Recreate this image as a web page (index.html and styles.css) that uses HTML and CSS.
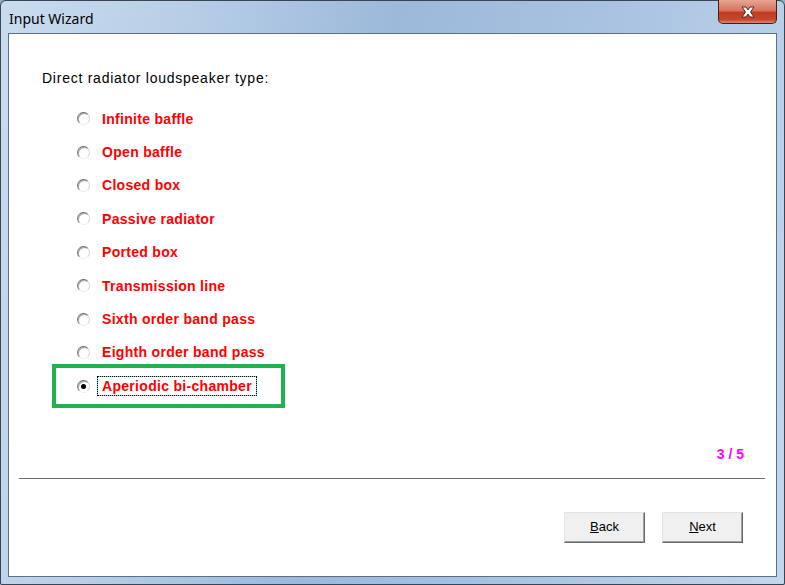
FILE: index.html
```html
<!DOCTYPE html>
<html>
	<head>
		<meta charset="UTF-8">
		<title>Input Wizard</title>
		<link rel="stylesheet" href="styles.css">
	</head>
	<body>
		<div class="window">
			<div class="titlebar">
				<span class="title">Input Wizard</span>
				<div class="closeBtn">
					<svg width="20" height="14" viewBox="0 0 20 14">
						<path d="M4 2 L8 2 L10 5 L12 2 L16 2 L12.5 7 L16 12 L12 12 L10 9 L8 12 L4 12 L7.5 7 Z" fill="#fff" stroke="#4a2a2a" stroke-width="1" stroke-linejoin="round"/>
					</svg>
				</div>
			</div>
			<div class="client">
				<div class="content">
					<div class="heading">Direct radiator loudspeaker type:</div>
					<div class="options">
						<div class="option"><span class="radio"></span><span class="label">Infinite baffle</span></div>
						<div class="option"><span class="radio"></span><span class="label">Open baffle</span></div>
						<div class="option"><span class="radio"></span><span class="label">Closed box</span></div>
						<div class="option"><span class="radio"></span><span class="label">Passive radiator</span></div>
						<div class="option"><span class="radio"></span><span class="label">Ported box</span></div>
						<div class="option"><span class="radio"></span><span class="label">Transmission line</span></div>
						<div class="option"><span class="radio"></span><span class="label">Sixth order band pass</span></div>
						<div class="option"><span class="radio"></span><span class="label">Eighth order band pass</span></div>
						<div class="option picked"><span class="radio checked"></span><span class="label focus">Aperiodic bi-chamber</span></div>
					</div>
					<div class="page">3 / 5</div>
				</div>
				<div class="sep"></div>
				<div class="buttons">
					<div class="btn"><u>B</u>ack</div>
					<div class="btn"><u>N</u>ext</div>
				</div>
			</div>
		</div>
	</body>
</html>
```

FILE: styles.css
```css
*{
	margin: 0;
	padding: 0;
	box-sizing: border-box;
}
body{
	width: 785px;
	height: 585px;
	overflow: hidden;
	background-color: #8fa9c6;
}
.window{
	width: 785px;
	height: 585px;
	border: 1px solid #3a4554;
	border-radius: 6px 6px 2px 2px;
	background: linear-gradient(100deg, #c9dcef 0%, #b8cfe7 20%, #9cb9da 45%, #a9c3e1 70%, #c3d7ec 100%);
	display: flex;
	flex-direction: column;
}
.titlebar{
	height: 32px;
	display: flex;
	align-items: flex-start;
	justify-content: space-between;
	padding-left: 8px;
	padding-right: 7px;
}
.title{
	font-family: "Noto Sans", sans-serif;
	font-size: 14px;
	color: #000;
	margin-top: 8px;
}
.closeBtn{
	width: 59px;
	height: 24px;
	margin-top: -1px;
	border: 1px solid #4b1c17;
	border-top: none;
	border-radius: 0 0 5px 5px;
	background: linear-gradient(#e8a595 0%, #d8745f 45%, #c23a1f 55%, #c5482c 85%, #d98a73 100%);
	display: flex;
	align-items: center;
	justify-content: center;
}
.client{
	flex: 1;
	margin: 0 7px 7px 7px;
	border: 1px solid #5d6f86;
	background-color: #fff;
	display: flex;
	flex-direction: column;
	font-family: "Liberation Sans", Arial, sans-serif;
	font-size: 14px;
}
.content{
	height: 444px;
	padding: 34px 0 0 33px;
	position: relative;
}
.heading{
	color: #000;
	height: 20px;
	line-height: 20px;
	letter-spacing: 0.75px;
}
.options{
	margin-top: 14px;
	padding-left: 35px;
}
.option{
	height: 33.4px;
	display: flex;
	align-items: center;
}
.radio{
	width: 13px;
	height: 13px;
	border-radius: 50%;
	border: 1px solid;
	border-color: #6a6a6a #d4d4d4 #eeeeee #7a7a7a;
	box-shadow: inset 1px 1px 0 #a8a8a8;
	background-color: #fff;
	margin-right: 12px;
	display: flex;
	align-items: center;
	justify-content: center;
}
.checked::after{
	content: "";
	width: 5px;
	height: 5px;
	border-radius: 50%;
	background-color: #000;
}
.label{
	color: #f00;
	font-weight: bold;
	letter-spacing: 0.3px;
}
.picked{
	width: 233px;
	height: 44px;
	margin: -5px 0 0 -25px;
	padding-left: 21px;
	border: 4px solid #22b14c;
}
.focus{
	margin-left: -5px;
	padding: 0 4px;
	height: 20px;
	line-height: 18px;
	border: 1px dotted #000;
	background: linear-gradient(#fff, #fff) padding-box, #5fdede border-box;
}
.page{
	position: absolute;
	right: 32px;
	top: 412px;
	color: #f0f;
	font-weight: bold;
}
.sep{
	height: 1px;
	margin: 0 11px 0 10px;
	background-color: #6d6d6d;
}
.buttons{
	display: flex;
	justify-content: flex-end;
	gap: 17px;
	padding: 33px 33px 0 0;
}
.btn{
	width: 81px;
	height: 31px;
	background-color: #f0f0f0;
	border: 1px solid;
	border-color: #e3e3e3 #696969 #696969 #e3e3e3;
	box-shadow: inset -1px -1px 0 #a0a0a0;
	text-align: center;
	line-height: 28px;
	color: #000;
	font-size: 13px;
}
```
